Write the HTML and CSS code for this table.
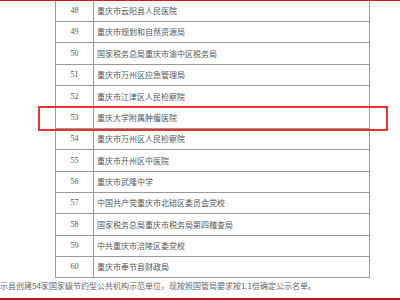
FILE: index.html
```html
<!DOCTYPE html>
<html lang="zh-CN">
<head>
<meta charset="utf-8">
<link rel="stylesheet" href="styles.css">
</head>
<body>
<div class="page">
  <div class="bar bar-top"></div>
  <div class="table-wrap">
    <table class="list">
      <tbody>
        <tr><td class="num">48</td><td class="name">重庆市云阳县人民医院</td></tr>
        <tr><td class="num">49</td><td class="name">重庆市规划和自然资源局</td></tr>
        <tr class="tall"><td class="num">50</td><td class="name">国家税务总局重庆市渝中区税务局</td></tr>
        <tr><td class="num">51</td><td class="name">重庆市万州区应急管理局</td></tr>
        <tr class="tall"><td class="num">52</td><td class="name">重庆市江津区人民检察院</td></tr>
        <tr><td class="num">53</td><td class="name">重庆大学附属肿瘤医院</td></tr>
        <tr><td class="num">54</td><td class="name">重庆市万州区人民检察院</td></tr>
        <tr class="tall"><td class="num">55</td><td class="name">重庆市开州区中医院</td></tr>
        <tr><td class="num">56</td><td class="name">重庆市武隆中学</td></tr>
        <tr><td class="num">57</td><td class="name">中国共产党重庆市北碚区委员会党校</td></tr>
        <tr class="tall"><td class="num">58</td><td class="name">国家税务总局重庆市税务局第四稽查局</td></tr>
        <tr><td class="num">59</td><td class="name">中共重庆市涪陵区委党校</td></tr>
        <tr><td class="num">60</td><td class="name">重庆市奉节县财政局</td></tr>
      </tbody>
    </table>
    <div class="highlight"></div>
  </div>
  <p class="note">示县创建54家国家级节约型公共机构示范单位，现按照国管局要求按1.1倍确定公示名单。</p>
  <div class="bar bar-bottom"></div>
</div>
</body>
</html>
```

FILE: styles.css
```css
html, body {
  margin: 0;
  padding: 0;
  background: #fff;
}
.page {
  width: 400px;
  height: 300px;
  overflow: hidden;
  display: flex;
  flex-direction: column;
}
.bar {
  background: #cc1a1a;
  flex: none;
}
.bar-top {
  height: 1px;
}
.bar-bottom {
  height: 2px;
  margin-top: auto;
  background: #c0161b;
}
.table-wrap {
  position: relative;
  padding-left: 55px;
  flex: none;
}
.list {
  border-collapse: collapse;
  width: 315px;
  table-layout: fixed;
}
.list td {
  border: 1px solid #999;
  height: 20px;
  padding: 0;
  vertical-align: middle;
  color: #555;
  font-size: 8px;
  line-height: 10px;
}
.list tr.tall td {
  height: 21px;
}
.list tr:first-child td {
  border-top: none;
}
.num {
  width: 37px;
  text-align: center;
  font-family: "Liberation Serif", serif;
}
.name {
  padding-left: 3px !important;
  font-family: "Noto Sans CJK SC", sans-serif;
}
.highlight {
  position: absolute;
  left: 38px;
  top: 105px;
  width: 346px;
  height: 21px;
  border: 2px solid #f23030;
}
.note {
  margin: 0;
  padding-top: 2px;
  font-family: "Noto Sans CJK SC", sans-serif;
  font-size: 8px;
  line-height: 12px;
  color: #666;
  white-space: nowrap;
  flex: none;
}
```
